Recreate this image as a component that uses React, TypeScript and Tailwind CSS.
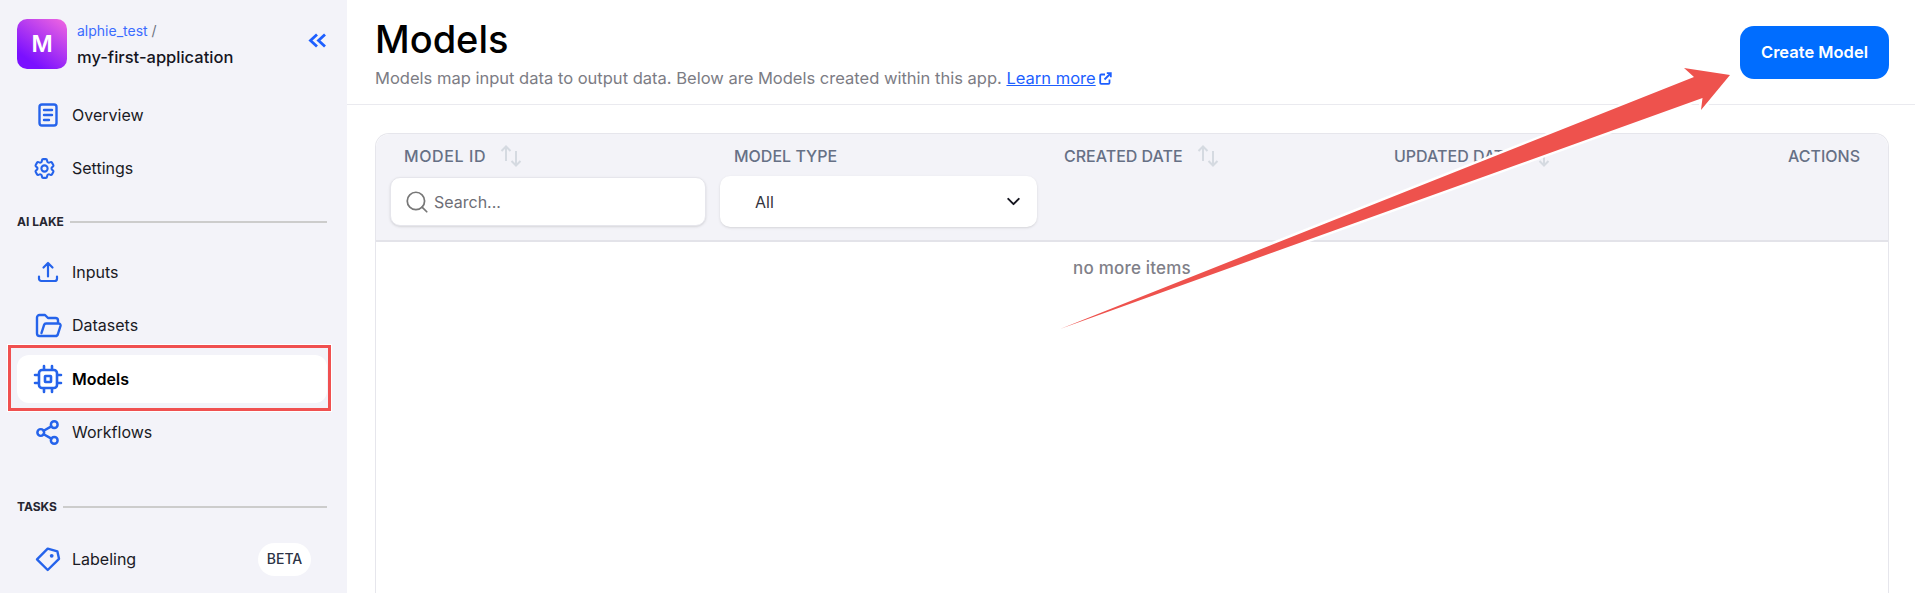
import { ChevronDown, Search, Share2 } from 'lucide-react'
import type { ReactNode } from 'react'
import { HiOutlineArrowUpTray, HiOutlineCog6Tooth } from 'react-icons/hi2'

const DocIcon = () => (
  <svg width="20" height="24" viewBox="0 0 20 24" fill="none" stroke="#2563eb" strokeWidth="2.4" strokeLinecap="round">
    <rect x="1.5" y="1.5" width="17" height="21" rx="2.5" />
    <path d="M6 7h8M6 12h8M6 17h5" />
  </svg>
)

const FolderIcon = () => (
  <svg width="28" height="25" viewBox="0 0 28 25" fill="none" stroke="#2563eb" strokeWidth="2.4" strokeLinecap="round" strokeLinejoin="round">
    <path d="M24 9.5V7.500a2.500 2.500 0 0 0-2.500-2.500H14L11 2H5.500A2.500 2.500 0 0 0 3 4.500v16A2.500 2.500 0 0 0 5.500 23h16a2.500 2.500 0 0 0 2.400-1.900L26.500 13a2 2 0 0 0-2-2.500H12a2 2 0 0 0-1.900 1.400L7.500 20" />
  </svg>
)

const ChipIcon = () => (
  <svg width="30" height="30" viewBox="0 0 30 30" fill="none" stroke="#2563eb" strokeWidth="2.6" strokeLinecap="round">
    <rect x="6" y="6" width="18" height="18" rx="3" />
    <rect x="12" y="12" width="6" height="6" rx="0.5" />
    <path d="M11 2v3M19 2v3M11 25v3M19 25v3M2 11h3M2 19h3M25 11h3M25 19h3" />
  </svg>
)

const TagIcon = () => (
  <svg width="26" height="26" viewBox="0 0 26 26" fill="none" stroke="#2563eb" strokeWidth="2.4" strokeLinejoin="round">
    <path d="M2 13.300 12.700 2.600 22.400 5.400 24 12.800 12.700 24Z" />
    <circle cx="16.7" cy="9.8" r="1.9" fill="#2563eb" stroke="none" />
  </svg>
)

const ExternalIcon = () => (
  <svg width="14" height="13" viewBox="0 0 14 13" fill="none" stroke="#1d5fff" strokeWidth="1.8" className="ml-[3px]">
    <path d="M6 2.500H2.200a1 1 0 0 0-1 1v7.300a1 1 0 0 0 1 1h7.300a1 1 0 0 0 1-1V7.500" />
    <path d="M5.500 7.500 11.500 1.500M7.800 1.200h4v4" />
  </svg>
)

const SortIcon = () => (
  <svg width="22" height="22" viewBox="0 0 22 22" fill="none" stroke="#d5dae1" strokeWidth="2" className="ml-[14px]">
    <path d="M6 16V1.500M1.500 6 6 1.500 10.500 6" />
    <path d="M16 6v14.500M11.500 16l4.500 4.500 4.500-4.500" />
  </svg>
)

const NavItem = ({ icon, label, active, badge }: { icon: ReactNode; label: string; active?: boolean; badge?: string }) => (
  <div className={`flex h-12 items-center rounded-xl pl-[15px] pr-4 text-base ${active ? 'bg-white font-semibold text-black' : 'text-[#1a1a24]'}`}>
    <span className="flex w-[40px] shrink-0 items-center justify-center pr-[9px] text-[#2563eb]">{icon}</span>
    <span>{label}</span>
    {badge && (
      <span className="ml-auto flex h-[33px] w-[53px] items-center justify-center rounded-full bg-white text-sm font-medium text-[#2c3345]">
        {badge}
      </span>
    )}
  </div>
)

const SectionLabel = ({ children }: { children: string }) => (
  <div className="flex items-center gap-1.5 text-xs font-bold text-[#262631]">
    <span>{children}</span>
    <span className="h-px flex-1 border-t-2 border-[#cccccc]" />
  </div>
)

const HeaderCell = ({ label, sort, className }: { label: string; sort?: boolean; className: string }) => (
  <div className={`flex items-center text-base font-medium text-[#667085] ${className}`}>
    {label}
    {sort && <SortIcon />}
  </div>
)

export default function App() {
  return (
    <div className="relative flex h-[593px] overflow-hidden bg-white font-['Inter',sans-serif]">
      <aside className="w-[347px] shrink-0 bg-[#f3f3f9] pl-[17px] pr-[20px] pt-[19px]">
        <div className="flex h-[50px] items-center">
          <div className="flex h-[50px] w-[50px] items-center justify-center rounded-[10px] bg-[linear-gradient(35deg,#7a10ff_20%,#f268e0_100%)] text-[23px] font-semibold text-white">
            M
          </div>
          <div className="ml-[10px] flex-1">
            <div className="pt-[2px] text-sm leading-[20px] text-[#3b6cff]">
              alphie_test <span className="text-[#6b7280]">/</span>
            </div>
            <div className="mt-[4px] text-[16.5px] font-medium leading-[24px] text-[#15151f]">my-first-application</div>
          </div>
          <svg width="19" height="15" viewBox="0 0 19 15" fill="none" stroke="#1d5fff" strokeWidth="2.8" className="mt-[-8px]">
            <path d="M9 1.500 2.500 7.500 9 13.500" />
            <path d="M17 1.500 10.500 7.500 17 13.500" />
          </svg>
        </div>

        <nav className="mt-[22px] flex flex-col gap-[5px]">
          <NavItem icon={<DocIcon />} label="Overview" />
          <NavItem icon={<HiOutlineCog6Tooth size={25} strokeWidth={2} className="-ml-[6px]" />} label="Settings" />
        </nav>
        <div className="mt-[22px]">
          <SectionLabel>AI LAKE</SectionLabel>
        </div>
        <nav className="mt-[18px] flex flex-col gap-[5.4px]">
          <NavItem icon={<HiOutlineArrowUpTray size={24} strokeWidth={2.2} />} label="Inputs" />
          <NavItem icon={<FolderIcon />} label="Datasets" />
          <NavItem icon={<ChipIcon />} label="Models" active />
          <NavItem icon={<Share2 size={27} strokeWidth={2.2} />} label="Workflows" />
        </nav>
        <div className="mt-[43px]">
          <SectionLabel>TASKS</SectionLabel>
        </div>
        <nav className="mt-[20px]">
          <NavItem icon={<TagIcon />} label="Labeling" badge="BETA" />
        </nav>
      </aside>

      <main className="flex min-w-0 flex-1 flex-col">
        <header className="flex h-[105px] justify-between border-b border-[#eaeaef] pl-[28px] pr-[26px] pt-[14px]">
          <div>
            <h1 className="text-[38px] font-medium leading-[50px] text-black">Models</h1>
            <p className="text-[16.53px] leading-[28px] text-[#7c7c84]">
              Models map input data to output data. Below are Models created within this app.{' '}
              <a className="inline-flex items-center text-[#1d5fff]">
                <span className="underline">Learn more</span>
                <ExternalIcon />
              </a>
            </p>
          </div>
          <button className="mt-[12px] h-[53px] w-[149px] rounded-[14px] bg-[#006dff] text-[16.5px] font-semibold text-white">
            Create Model
          </button>
        </header>

        <section className="ml-[28px] mr-[26px] mt-[28px] flex-1 rounded-t-[14px] border border-b-0 border-[#e6e6ec]">
          <div className="h-[108px] rounded-t-[14px] border-b-2 border-[#e3e3e9] bg-[#f3f3f8] px-[14px]">
            <div className="flex h-[43px] items-center pl-[14px]">
              <HeaderCell label="MODEL ID" sort className="w-[330px] tracking-[0.6px]" />
              <HeaderCell label="MODEL TYPE" className="w-[330px]" />
              <HeaderCell label="CREATED DATE" sort className="w-[330px]" />
              <HeaderCell label="UPDATED DATE" sort className="w-[330px]" />
              <HeaderCell label="ACTIONS" className="flex-1 justify-end pr-[14px]" />
            </div>
            <div className="flex gap-[14px]">
              <div className="flex h-[49px] w-[316px] items-center rounded-[10px] border border-[#e6e6ec] bg-white pl-[13px] shadow-sm">
                <Search size={26} strokeWidth={1.6} className="text-[#777777]" />
                <span className="ml-[4px] text-base text-[#6e6e76]">Search...</span>
              </div>
              <div className="-mt-px flex h-[51px] w-[317px] items-center justify-between rounded-[10px] bg-white pl-[35px] pr-[13px] shadow-sm">
                <span className="text-base text-[#33333d]">All</span>
                <ChevronDown size={21} strokeWidth={2.2} className="text-[#15151f]" />
              </div>
            </div>
          </div>
          <div className="flex justify-center pt-[14px]">
            <span className="text-[17px] font-medium tracking-[0.2px] text-[#808088]">no more items</span>
          </div>
        </section>
      </main>

      {/* annotations drawn on top of the screenshot */}
      <div className="pointer-events-none absolute left-[8px] top-[345px] h-[66px] w-[323px] border-[3px] border-[#f05050] shadow-[0_0_0_1px_#ffffff]" />
      <svg className="pointer-events-none absolute left-0 top-0" width="1915" height="593" fill="none">
        <path d="M1060 329 L1694 77 L1684 68 L1730 75 L1701 110 L1702.500 98 Z" stroke="#ffffff" strokeWidth="5" strokeLinejoin="round" />
        <path d="M1060 329 L1694 77 L1684 68 L1730 75 L1701 110 L1702.500 98 Z" fill="#ee524d" />
      </svg>
    </div>
  )
}
